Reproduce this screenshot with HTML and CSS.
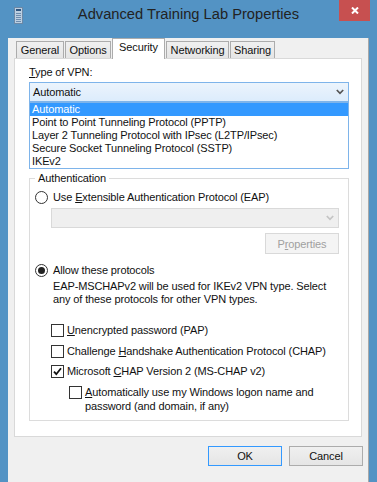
FILE: index.html
```html
<!DOCTYPE html>
<html lang="en">
<head>
    <meta charset="UTF-8">
    <title>Advanced Training Lab Properties</title>
    <link rel="stylesheet" href="styles.css">
</head>
<body>

<div class="window">
    <div class="titlebar">
        <svg class="app-icon" width="9" height="17" viewBox="0 0 9 17">
            <rect x="0.5" y="0.5" width="8" height="16" fill="#bccfe1" stroke="#6b88a6"/>
            <rect x="2" y="2" width="5" height="2" fill="#2f5580"/>
            <rect x="2" y="6" width="5" height="1" fill="#6d8cae"/>
            <rect x="2" y="8" width="5" height="1" fill="#6d8cae"/>
            <rect x="2" y="10" width="5" height="1" fill="#6d8cae"/>
            <rect x="2" y="12" width="5" height="1" fill="#6d8cae"/>
            <rect x="2" y="14" width="5" height="1" fill="#6d8cae"/>
        </svg>
        <div class="title">Advanced Training Lab Properties</div>
        <div class="close">
            <svg width="8" height="7" viewBox="0 0 8 7">
                <path d="M1 0.5 L7 6.5 M7 0.5 L1 6.5" stroke="#fff" stroke-width="2"/>
            </svg>
        </div>
    </div>

    <div class="client">
        <div class="tabs">
            <div class="tab tab-general">General</div>
            <div class="tab tab-options">Options</div>
            <div class="tab tab-security active">Security</div>
            <div class="tab tab-networking">Networking</div>
            <div class="tab tab-sharing">Sharing</div>
        </div>

        <div class="page">
            <div class="label"><u>T</u>ype of VPN:</div>
            <div class="combo-wrap">
                <div class="combo">
                    <span>Automatic</span>
                    <svg class="chevron" width="8" height="6" viewBox="0 0 8 6">
                        <path d="M0.8 1 L4 4.3 L7.2 1" fill="none" stroke="#555" stroke-width="1.7"/>
                    </svg>
                </div>
                <ul class="dropdown">
                    <li class="selected">Automatic</li>
                    <li>Point to Point Tunneling Protocol (PPTP)</li>
                    <li>Layer 2 Tunneling Protocol with IPsec (L2TP/IPsec)</li>
                    <li>Secure Socket Tunneling Protocol (SSTP)</li>
                    <li>IKEv2</li>
                </ul>
            </div>

            <fieldset class="group">
                <legend>Authentication</legend>

                <div class="option">
                    <span class="radio"></span>
                    <span>Use <u>E</u>xtensible Authentication Protocol (EAP)</span>
                </div>
                <div class="combo disabled">
                    <span></span>
                    <svg class="chevron" width="8" height="6" viewBox="0 0 8 6">
                        <path d="M0.8 1 L4 4.3 L7.2 1" fill="none" stroke="#c4c4c4" stroke-width="1.7"/>
                    </svg>
                </div>
                <button class="btn btn-props" disabled>P<u>r</u>operties</button>

                <div class="option option-allow">
                    <span class="radio checked"></span>
                    <span>Allow these protocols</span>
                </div>
                <p class="desc">EAP-MSCHAPv2 will be used for IKEv2 VPN type. Select<br>any of these protocols for other VPN types.</p>

                <div class="checks">
                    <div class="check-row">
                        <span class="box"></span>
                        <span><u>U</u>nencrypted password (PAP)</span>
                    </div>
                    <div class="check-row">
                        <span class="box"></span>
                        <span>Challenge <u>H</u>andshake Authentication Protocol (CHAP)</span>
                    </div>
                    <div class="check-row row-mschap">
                        <span class="box">
                            <svg width="11" height="11" viewBox="0 0 11 11">
                                <path d="M2 5.6 L4.3 8.2 L9 2.3" fill="none" stroke="#111" stroke-width="1.8"/>
                            </svg>
                        </span>
                        <span>Microsoft <u>C</u>HAP Version 2 (MS-CHAP v2)</span>
                    </div>
                    <div class="check-row sub">
                        <span class="box"></span>
                        <span><u>A</u>utomatically use my Windows logon name and<br>password (and domain, if any)</span>
                    </div>
                </div>
            </fieldset>
        </div>

        <div class="buttons">
            <button class="btn btn-default">OK</button>
            <button class="btn">Cancel</button>
        </div>
    </div>
</div>

</body>
</html>
```

FILE: styles.css
```css
body {
    margin: 0;
    background-color: #5393c4;
    font-family: "Liberation Sans", Arial, sans-serif;
    font-size: 11px;
    letter-spacing: -0.12px;
    color: #111;
}
.window {
    width: 377px;
    height: 482px;
}
.titlebar {
    height: 30px;
    display: grid;
    grid-template-columns: 1fr auto 1fr;
}
.app-icon {
    margin: 7px 0 0 14px;
}
.title {
    font-size: 14.7px;
    letter-spacing: 0;
    line-height: 29px;
    color: #222;
}
.close {
    justify-self: end;
    width: 31px;
    height: 21px;
    margin-right: 7px;
    background-color: #c75050;
    display: flex;
    align-items: center;
    justify-content: center;
}
.client {
    margin-left: 8px;
    width: 361px;
    height: 449px;
    box-sizing: border-box;
    background-color: #f0f0f0;
    border-right: 1px solid #a8a8a8;
    border-bottom: 1px solid #a8a8a8;
}

/* tabs */
.tabs {
    display: flex;
    align-items: flex-end;
    gap: 1px;
    height: 20px;
    margin: 8px 0 0 8px;
}
.tab {
    height: 17px;
    box-sizing: border-box;
    border: 1px solid #acacac;
    border-bottom: none;
    background: linear-gradient(#f0f0f0, #e5e5e5);
    text-align: center;
    line-height: 17px;
}
.tab.active {
    height: 21px;
    margin-bottom: -1px;
    position: relative;
    background: #fff;
    line-height: 16px;
}
.tab-general { width: 48px; }
.tab-options { width: 46px; }
.tab-security { width: 53px; }
.tab-networking { width: 63px; }
.tab-sharing { width: 45px; }

.page {
    margin-left: 6px;
    width: 348px;
    height: 379px;
    box-sizing: border-box;
    border: 1px solid #d9d9d9;
    background-color: #fff;
    padding: 7px 12px 0 14px;
}
.label {
    line-height: 13px;
}

/* combo box */
.combo-wrap {
    position: relative;
    margin-top: 3px;
}
.combo {
    height: 20px;
    box-sizing: border-box;
    border: 1px solid #7eb4ea;
    background: linear-gradient(#ecf4fc, #dcecfc);
    display: flex;
    align-items: center;
    justify-content: space-between;
    padding: 0 4px 0 3px;
}
.combo.disabled {
    margin: 4px 0 0 16px;
    border-color: #d9d9d9;
    background: #efefef;
}
.dropdown {
    position: absolute;
    top: 100%;
    left: 0;
    right: 0;
    margin: 0;
    padding: 0;
    list-style: none;
    background-color: #fff;
    border: 1px solid #7eb4ea;
    z-index: 2;
}
.dropdown li {
    line-height: 13px;
    padding-left: 2px;
}
.dropdown li.selected {
    background-color: #3399ff;
    color: #fff;
}

/* group box */
.group {
    margin: 69px 0 0;
    height: 250px;
    box-sizing: border-box;
    border: 1px solid #dcdcdc;
    padding: 5px 9px 0 5px;
}
.group legend {
    padding: 0 3px;
    line-height: 14px;
}
.option {
    display: flex;
    align-items: center;
    gap: 5px;
    height: 14px;
}
.option-allow {
    margin-top: 9px;
}
.radio {
    width: 13px;
    height: 13px;
    box-sizing: border-box;
    border: 1px solid #333;
    border-radius: 50%;
    background-color: #fff;
    display: flex;
    align-items: center;
    justify-content: center;
}
.radio.checked::after {
    content: "";
    width: 7px;
    height: 7px;
    border-radius: 50%;
    background-color: #222;
}
.desc {
    margin: 3px 0 0 18px;
    line-height: 13px;
}
.checks {
    margin: 17px 0 0 16px;
}
.check-row {
    display: flex;
    align-items: center;
    gap: 3px;
    height: 14px;
    margin-top: 7px;
}
.check-row:first-child {
    margin-top: 0;
}
.row-mschap {
    margin-top: 6px;
}
.check-row.sub {
    align-items: flex-start;
    height: auto;
    line-height: 14px;
    margin-left: 18px;
}
.check-row.sub .box {
    margin-top: 0.5px;
}
.box {
    width: 13px;
    height: 13px;
    flex: none;
    box-sizing: border-box;
    border: 1px solid #333;
    background-color: #fff;
    display: flex;
    align-items: center;
    justify-content: center;
}

/* buttons */
.btn {
    display: block;
    width: 74px;
    height: 20px;
    padding: 0;
    box-sizing: border-box;
    border: 1px solid #acacac;
    background: linear-gradient(#f0f0f0, #e5e5e5);
    font-family: "Liberation Sans", Arial, sans-serif;
    font-size: 11px;
    letter-spacing: -0.12px;
    color: #111;
}
.btn-props {
    height: 21px;
    margin: 5px 0 0 auto;
    border-color: #d9d9d9;
    background: #f4f4f4;
    color: #a0a0a0;
}
.btn-default {
    border-color: #3399ff;
}
.buttons {
    display: flex;
    justify-content: flex-end;
    gap: 7px;
    margin-top: 9px;
    padding-right: 5px;
}
```
